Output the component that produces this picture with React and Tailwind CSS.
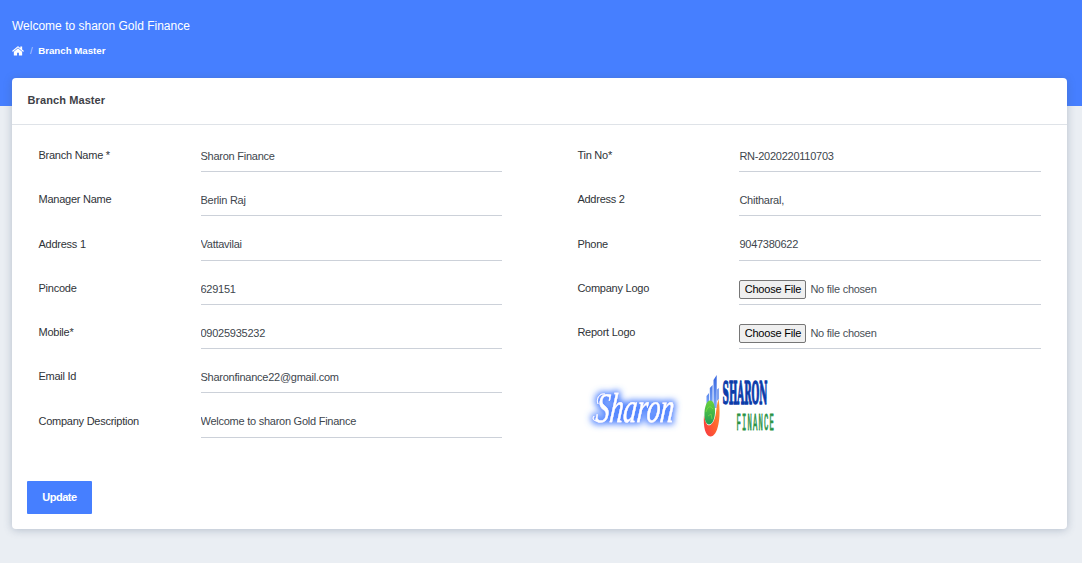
import React from "react";

const leftFields = [
  ["Branch Name *", "Sharon Finance"],
  ["Manager Name", "Berlin Raj"],
  ["Address 1", "Vattavilai"],
  ["Pincode", "629151"],
  ["Mobile*", "09025935232"],
  ["Email Id", "Sharonfinance22@gmail.com"],
  ["Company Description", "Welcome to sharon Gold Finance"],
];

const rightFields = [
  ["Tin No*", "RN-2020220110703"],
  ["Address 2", "Chitharal,"],
  ["Phone", "9047380622"],
  ["Company Logo", null],
  ["Report Logo", null],
];

function HomeIcon() {
  return (
    <svg width="12" height="12" viewBox="0 64 1664 1664" fill="currentColor">
      <path d="M1408 992v480q0 26-19 45t-45 19H960v-384H704v384H320q-26 0-45-19t-19-45V992q0-1 .5-3t.5-3l575-474 575 474q1 2 1 6zm223-69l-62 74q-8 9-21 11h-3q-13 0-21-7L832 424l-692 577q-12 8-24 7-13-2-21-11l-62-74q-8-10-7-23.500T37 878l719-599q32-26 76-26t76 26l244 204V288q0-14 9-23t23-9h192q14 0 23 9t9 23v408l219 182q10 8 11 21.500t-7 23.500z" />
    </svg>
  );
}

function Field({ label, value }) {
  return (
    <label className="flex h-[44.25px] items-start tracking-[-0.25px]">
      <span className="w-[162px] shrink-0 pt-[4px] text-[#2f3338]">{label}</span>
      {value === null ? (
        <input
          type="file"
          className="h-[29px] w-[301.500px] border-b border-[#ccd1d9] pt-[4px] leading-[17px] text-[#495057] file:mr-1 file:h-[19px] file:w-[67px] file:rounded-[2px] file:border file:border-solid file:border-[#767676] file:bg-[#efefef] file:px-0 file:py-0 file:text-center file:leading-[17px] file:tracking-[-0.2px] file:text-black"
        />
      ) : (
        <input
          type="text"
          defaultValue={value}
          className="h-[29px] w-[301.500px] border-b border-[#ccd1d9] pb-[2.200px] text-[#40464d] outline-none"
        />
      )}
    </label>
  );
}

function ScriptLogo() {
  return (
    <svg width="110" height="75" viewBox="0 0 110 75" className="shrink-0 overflow-visible">
      <defs>
        <filter id="glow" x="-20%" y="-40%" width="140%" height="180%">
          <feMorphology in="SourceAlpha" operator="dilate" radius="2" />
          <feGaussianBlur stdDeviation="3.2" result="b" />
          <feFlood floodColor="#3f78ff" floodOpacity="0.9" />
          <feComposite in2="b" operator="in" result="c" />
          <feMerge>
            <feMergeNode in="c" />
            <feMergeNode in="SourceGraphic" />
          </feMerge>
        </filter>
      </defs>
      <g filter="url(#glow)" fill="#fff">
        <g transform="translate(15 51.5) skewX(-6)">
          <text x="0" y="0" fontFamily="'Liberation Serif', serif" fontStyle="italic" fontSize="42" stroke="#fff" strokeWidth="0.3" textLength="78" lengthAdjust="spacingAndGlyphs">Sharon</text>
        </g>
        <path d="M18 50C14 52 12 49 14 46M25 24C19 23 16 29 18 34" fill="none" stroke="#fff" strokeWidth="1" />
      </g>
    </svg>
  );
}

function CompanyLogo() {
  return (
    <svg width="95" height="75" viewBox="0 0 95 75" className="shrink-0 overflow-visible">
      <defs>
        <linearGradient id="bars" x1="0" x2="0" y1="0" y2="1">
          <stop stopColor="#3564df" />
          <stop offset="1" stopColor="#86b1fb" />
        </linearGradient>
        <linearGradient id="swoosh" x1="1" x2="0" y1="0" y2="1">
          <stop stopColor="#ff9b38" />
          <stop offset="0.5" stopColor="#ff642e" />
          <stop offset="1" stopColor="#f73545" />
        </linearGradient>
        <linearGradient id="globe" x1="0" x2="0" y1="0" y2="1">
          <stop stopColor="#6bd33a" />
          <stop offset="1" stopColor="#1f9d58" />
        </linearGradient>
      </defs>
      <path d="M16.500 26l2.500-3v17l-2.500 2zM19.800 18l2.800-3v24h-2.800zM23.500 10l3.200-5v33h-3.200z" fill="url(#bars)" />
      <path d="M27.300 19.500l1.400-1.500v11l-1.400 2z" fill="#4b7be8" />
      <path d="M28.500 29C31.500 47 28 66.500 20.500 66.500C15.500 66.500 13 57 14 45C15.500 54 18 58 22 53.500C27 48 25.500 38 28.500 29Z" fill="url(#swoosh)" />
      <path d="M20 30.500C24 30.500 25.500 37 25 43C24.500 50 22 54.500 19 54.500C16 54.500 14 49 14.500 42C15 36 17 30.500 20 30.500Z" fill="url(#globe)" />
      <path d="M16 42C18 35 21 36 23 39M18 46l3-2 1 5" fill="none" stroke="#98e743" strokeWidth="0.7" opacity="0.7" />
      <text x="32.500" y="33.500" fontFamily="'DejaVu Serif', serif" fontWeight="700" fontSize="31.500" fill="#0c3caa" stroke="#0c3caa" strokeWidth="1.5" textLength="45" lengthAdjust="spacingAndGlyphs">SHARON</text>
      <g transform="translate(46.500 60) scale(0.3 1)">
        <text x="0" y="0" fontFamily="'Liberation Mono', monospace" fontSize="24" fill="#299346" stroke="#299346" strokeWidth="0.900" textLength="124" lengthAdjust="spacing">FINANCE</text>
      </g>
    </svg>
  );
}

export default function App() {
  return (
    <div className="h-[563px] w-[1082px] overflow-hidden bg-[#eaeef3] font-['Liberation_Sans',sans-serif] text-[11px] leading-[16px]">
      <header className="h-[106px] bg-[#467fff] pl-3 pt-[17px] text-white">
        <h1 className="text-[12px] leading-[18px]">Welcome to sharon Gold Finance</h1>
        <nav className="mt-[7px] flex items-center pt-px text-[9.700px] font-bold">
          <HomeIcon />
          <span className="ml-[6px] mr-[5.500px] font-normal text-[#b5ccff]">/</span>
          <span>Branch Master</span>
        </nav>
      </header>
      <main className="relative -mt-7 ml-3 flex h-[451px] w-[1055px] flex-col rounded-[4px] bg-white shadow-[0_1px_8px_rgba(69,90,120,0.32)]">
        <h2 className="h-[47px] shrink-0 border-b border-[#dfe3e8] pl-[15.500px] pt-[14px] font-bold tracking-[0.1px] text-[#3e4147]">Branch Master</h2>
        <div className="flex shrink-0 pl-[26.500px] pt-[18px]">
          <section className="w-[538.900px]">
            {leftFields.map(([label, value]) => (
              <Field key={label} label={label} value={value} />
            ))}
          </section>
          <section>
            {rightFields.map(([label, value]) => (
              <Field key={label} label={label} value={value} />
            ))}
            <div className="flex pl-[2.600px] pt-[5.750px]">
              <ScriptLogo />
              <CompanyLogo />
            </div>
          </section>
        </div>
        <button className="mb-[15px] ml-[15px] mt-auto h-[33px] w-[65px] rounded-[1px] bg-[#467fff] pb-px text-[11px] font-bold tracking-[-0.5px] text-white">Update</button>
      </main>
    </div>
  );
}
